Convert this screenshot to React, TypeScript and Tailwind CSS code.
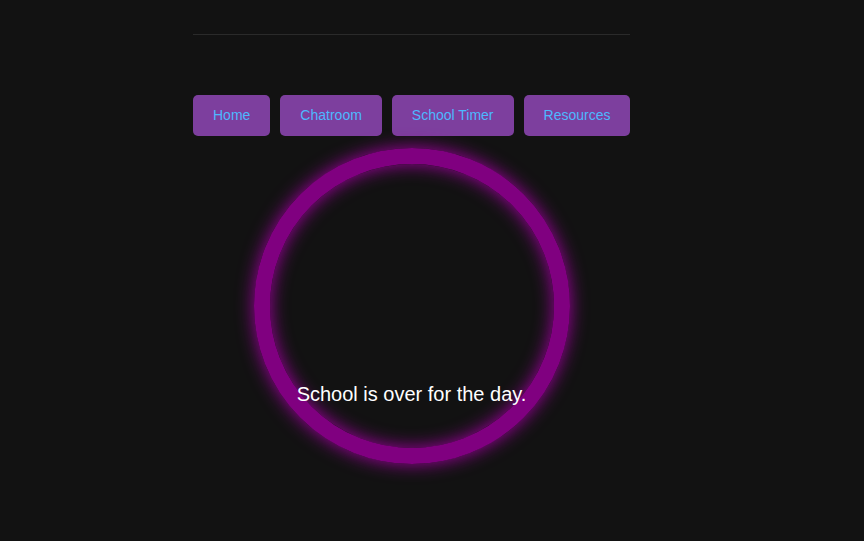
const links = ["Home", "Chatroom", "School Timer", "Resources"];

export default function App() {
  return (
    <div className="min-h-[541px] w-full bg-[#121212] font-['Liberation_Sans',Arial,sans-serif]">
      <div className="ml-[193px] w-[437px] pt-[34px]">
        <div className="h-px w-full bg-[#2a2a2a]"></div>
        <nav className="mt-[60px] flex gap-[10px]">
          {links.map((label) => (
            <button
              key={label}
              className="h-[41px] shrink-0 whitespace-nowrap rounded-[5px] bg-[#7d3f9e] px-5 text-[14px] text-[#4db8ff]"
            >
              {label}
            </button>
          ))}
        </nav>
        <div className="mt-3 flex justify-center">
          <div className="box-border flex h-[316px] w-[316px] flex-col items-center justify-end rounded-full border-[16px] border-[#800080] pb-[42px] shadow-[0_0_18px_#a000a0,inset_0_0_18px_#a000a0]">
            <p className="whitespace-nowrap text-[20px] leading-[23px] text-white">
              School is over for the day.
            </p>
          </div>
        </div>
      </div>
    </div>
  );
}
